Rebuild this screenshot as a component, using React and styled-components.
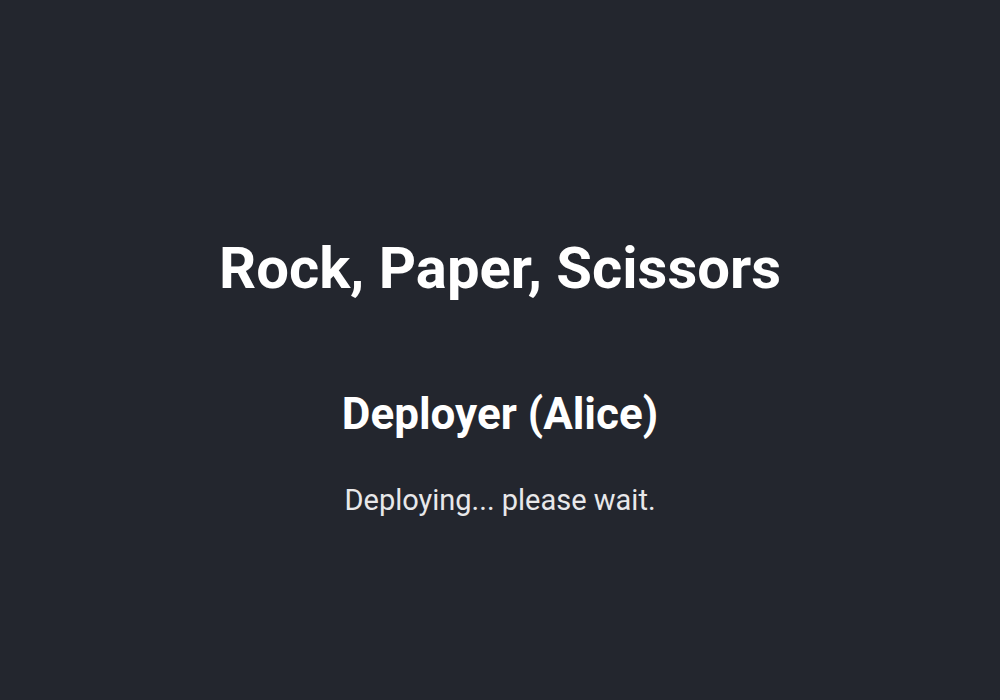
import styled, { createGlobalStyle } from "styled-components";

const GlobalStyle = createGlobalStyle`
  html, body {
    margin: 0;
    padding: 0;
    background: #23262e;
  }
  body {
    font-family: Roboto, "Liberation Sans", sans-serif;
    color: #ffffff;
  }
`;

const Page = styled.div`
  min-height: 700px;
  display: flex;
  flex-direction: column;
  align-items: center;
  padding-top: 236px;
  box-sizing: border-box;
`;

const Title = styled.h1`
  margin: 0;
  font-size: 58px;
  font-weight: 700;
  line-height: 64px;
`;

const Heading = styled.h2`
  margin: 90px 0 0;
  font-size: 44px;
  font-weight: 700;
  line-height: 48px;
`;

const Status = styled.p`
  margin: 46px 0 0;
  font-size: 29px;
  font-weight: 400;
  line-height: 32px;
  color: #e8e8ea;
`;

export default function App() {
  return (
    <>
      <GlobalStyle />
      <Page>
        <Title>Rock, Paper, Scissors</Title>
        <Heading>Deployer (Alice)</Heading>
        <Status>Deploying... please wait.</Status>
      </Page>
    </>
  );
}
